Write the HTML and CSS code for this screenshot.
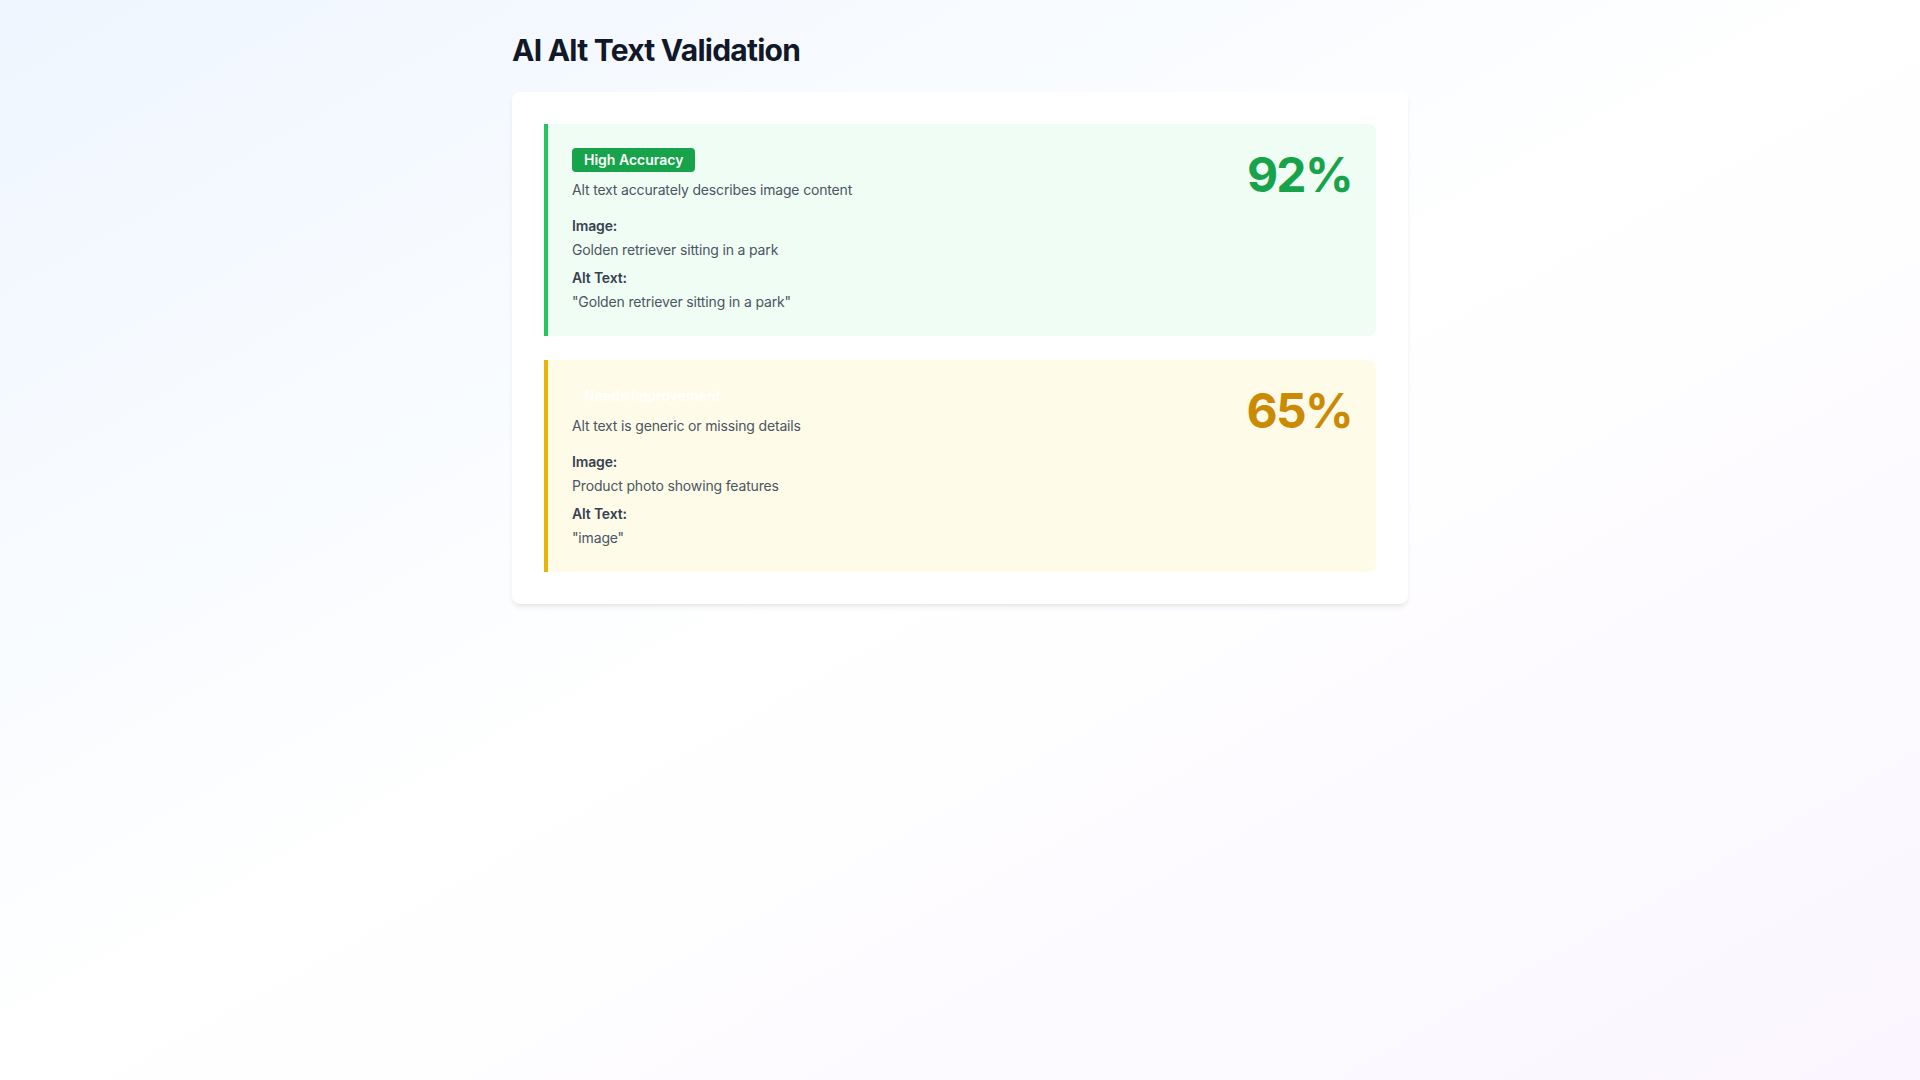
FILE: index.html
```html
<!DOCTYPE html>
<html lang="en">
<head>
    <meta charset="UTF-8">
    <meta name="viewport" content="width=device-width, initial-scale=1.0">
    <title>AI Alt Text Validation</title>
    <link rel="stylesheet" href="styles.css">
</head>
<body>

<div class="page">
    <div class="container">
        <h1 class="title">AI Alt Text Validation</h1>

        <div class="panel">
            <!-- 高准确度 -->
            <div class="result result-good">
                <div class="result-info">
                    <span class="badge badge-good">High Accuracy</span>
                    <p class="summary">Alt text accurately describes image content</p>
                    <div class="fields">
                        <div class="field">
                            <div class="field-label">Image:</div>
                            <div class="field-value">Golden retriever sitting in a park</div>
                        </div>
                        <div class="field">
                            <div class="field-label">Alt Text:</div>
                            <div class="field-value">"Golden retriever sitting in a park"</div>
                        </div>
                    </div>
                </div>
                <div class="score score-good">92%</div>
            </div>

            <!-- 需要改进 -->
            <div class="result result-warn">
                <div class="result-info">
                    <span class="badge badge-warn">Needs Improvement</span>
                    <p class="summary">Alt text is generic or missing details</p>
                    <div class="fields">
                        <div class="field">
                            <div class="field-label">Image:</div>
                            <div class="field-value">Product photo showing features</div>
                        </div>
                        <div class="field">
                            <div class="field-label">Alt Text:</div>
                            <div class="field-value">"image"</div>
                        </div>
                    </div>
                </div>
                <div class="score score-warn">65%</div>
            </div>
        </div>
    </div>
</div>

</body>
</html>
```

FILE: styles.css
```css
/* 基本样式 */
html, body {
    margin: 0;
    padding: 0;
}
body {
    font-family: Inter, "Liberation Sans", sans-serif;
    color: #111827;
    letter-spacing: -0.01em;
}
.page {
    min-height: 100vh;
    box-sizing: border-box;
    padding: 32px;
    background: linear-gradient(to bottom right, #eff6ff, #ffffff 50%, #faf5ff);
}
.container {
    max-width: 896px;
    margin: 0 auto;
}
.title {
    margin: 0 0 24px;
    font-size: 30px;
    line-height: 36px;
    font-weight: 700;
    letter-spacing: -0.025em;
    color: #111827;
}
.panel {
    background-color: #fff;
    border-radius: 8px;
    padding: 32px;
    box-shadow: 0 4px 6px -1px rgba(0, 0, 0, 0.08), 0 2px 4px -2px rgba(0, 0, 0, 0.06);
    display: flex;
    flex-direction: column;
    gap: 24px;
}

/* 结果卡片 */
.result {
    display: flex;
    justify-content: space-between;
    align-items: flex-start;
    padding: 24px;
    border-left: 4px solid;
    border-radius: 0 8px 8px 0;
}
.result-good {
    background-color: #f0fdf4;
    border-color: #22c55e;
}
.result-warn {
    background-color: #fefce8;
    border-color: #eab308;
}
.badge {
    display: inline-block;
    padding: 2px 12px;
    border-radius: 4px;
    font-size: 14px;
    line-height: 20px;
    font-weight: 600;
    letter-spacing: 0;
    color: #fff;
}
.badge-good {
    background-color: #16a34a;
}
.badge-warn {
    background-color: transparent; /* 原页面没有背景 */
}
.summary {
    margin: 8px 0 0;
    font-size: 14px;
    line-height: 20px;
    color: #4b5563;
}
.fields {
    margin-top: 16px;
    display: flex;
    flex-direction: column;
    gap: 8px;
}
.field-label {
    font-size: 14px;
    line-height: 20px;
    font-weight: 600;
    color: #374151;
    margin-bottom: 4px;
}
.field-value {
    font-size: 14px;
    line-height: 20px;
    color: #4b5563;
}
.score {
    font-size: 48px;
    line-height: 1;
    font-weight: 700;
    letter-spacing: -0.035em;
    padding-top: 3px;
}
.score-good {
    color: #16a34a;
}
.score-warn {
    color: #ca8a04;
}
```
